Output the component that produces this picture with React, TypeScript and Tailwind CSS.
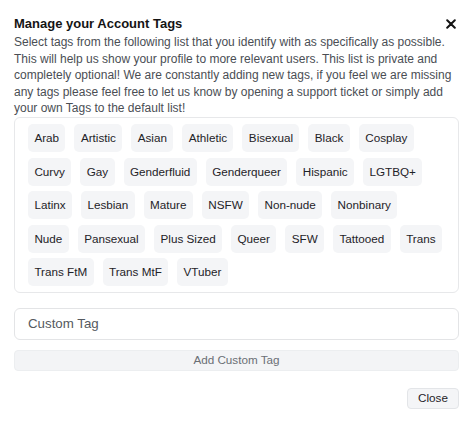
import React from "react";

const TAGS: string[][] = [
  ["Arab", "Artistic", "Asian", "Athletic", "Bisexual", "Black", "Cosplay"],
  ["Curvy", "Gay", "Genderfluid", "Genderqueer", "Hispanic", "LGTBQ+"],
  ["Latinx", "Lesbian", "Mature", "NSFW", "Non-nude", "Nonbinary"],
  ["Nude", "Pansexual", "Plus Sized", "Queer", "SFW", "Tattooed", "Trans"],
  ["Trans FtM", "Trans MtF", "VTuber"],
];

const App: React.FC = () => {
  return (
    <div className="w-[474px] h-[423px] bg-white px-[14px] pt-[15px] font-['Liberation_Sans',Arial,sans-serif] text-[#1f2328]">
      <div className="flex items-center justify-between w-[445px] pr-[3px]">
        <h2 className="text-[13px] font-bold leading-[18px] text-[#141414]">
          Manage your Account Tags
        </h2>
        <button className="w-[11px] h-[12px] flex items-center justify-center">
          <svg width="10" height="10" viewBox="0 0 10 10">
            <path d="M1.2 1.2 L8.8 8.8 M8.8 1.2 L1.2 8.8" stroke="#141414" strokeWidth="2" strokeLinecap="round" />
          </svg>
        </button>
      </div>

      <p className="mt-[1px] text-[12px] leading-[16.5px] text-[#4a4e54] w-[446px]">
        Select tags from the following list that you identify with as specifically as possible.
        <br />
        This will help us show your profile to more relevant users. This list is private and
        <br />
        completely optional! We are constantly adding new tags, if you feel we are missing
        <br />
        any tags please feel free to let us know by opening a support ticket or simply add
        <br />
        your own Tags to the default list!
      </p>

      <div className="mt-[0.5px] w-[445px] border border-[#e7e8ea] rounded-[6px] px-[13px] py-[6px] flex flex-col gap-[5.5px]">
        {TAGS.map((row, i) => (
          <div key={i} className="flex flex-nowrap gap-[9px]">
            {row.map((t) => (
              <span
                key={t}
                className="h-[28px] px-[6.4px] flex items-center whitespace-nowrap rounded-[5px] bg-[#f4f5f7] text-[11.7px] text-[#1f2328]"
              >
                {t}
              </span>
            ))}
          </div>
        ))}
      </div>

      <input
        className="block mt-[14.5px] w-[445px] h-[32px] border border-[#e3e4e6] rounded-[6px] px-[13px] text-[13.3px] text-[#333] placeholder:text-[#555a60] outline-none"
        placeholder="Custom Tag"
      />

      <button className="mt-[10px] w-[445px] h-[21px] rounded-[4px] bg-[#f3f4f6] border border-[#eceef0] text-[11.7px] text-[#6b6f75] flex items-center justify-center">
        Add Custom Tag
      </button>

      <div className="mt-[17px] flex justify-end w-[445px]">
        <button className="w-[52px] h-[21px] rounded-[4px] bg-[#f4f5f7] border border-[#e3e5e8] text-[11.7px] text-[#1f2328] flex items-center justify-center">
          Close
        </button>
      </div>
    </div>
  );
};

export default App;
